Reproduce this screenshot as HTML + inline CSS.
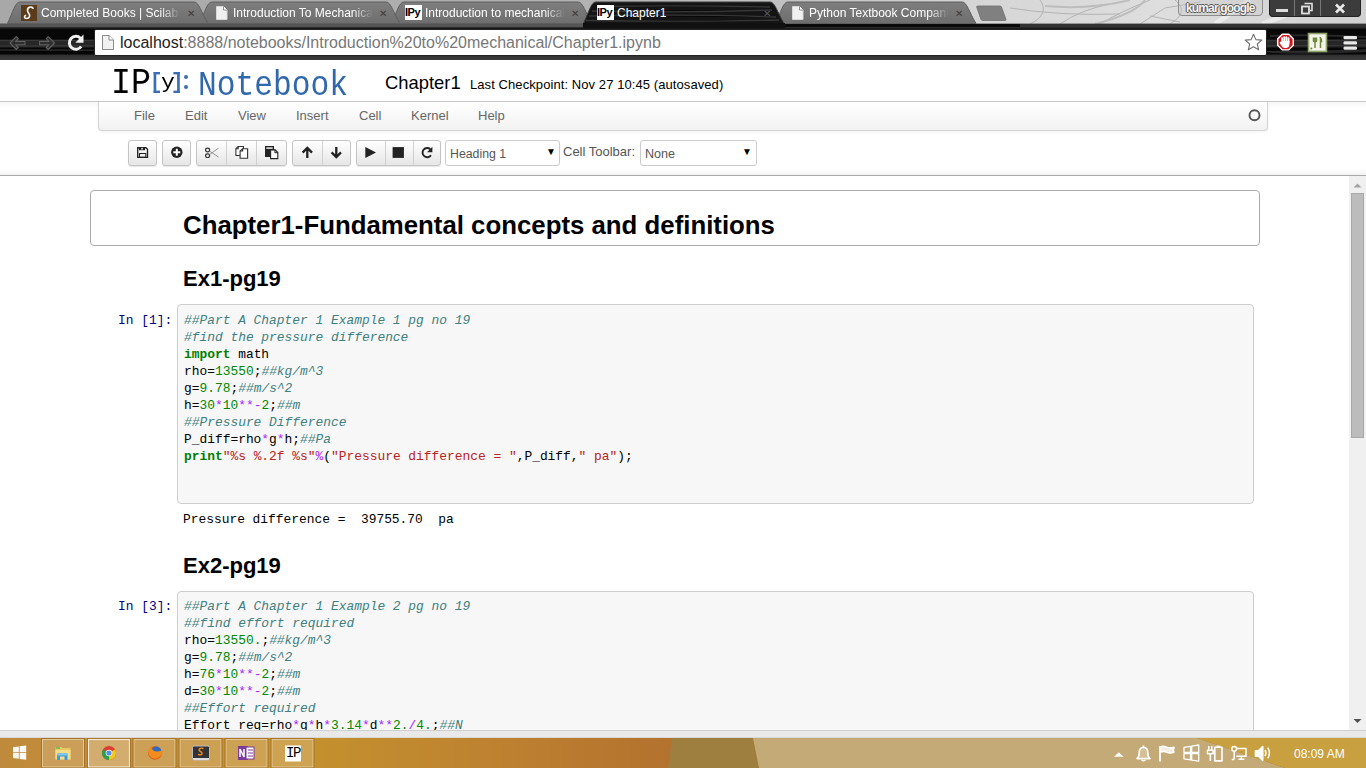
<!DOCTYPE html>
<html><head><meta charset="utf-8">
<style>
*{box-sizing:border-box;margin:0;padding:0}
html,body{width:1366px;height:768px;overflow:hidden;background:#fff;font-family:"Liberation Sans",sans-serif}
.a{position:absolute;white-space:pre}
#tabstrip{position:absolute;left:0;top:0;width:1366px;height:28px;background:linear-gradient(90deg,#a8a8a8 0%,#b0b0b0 40%,#c4c4c4 60%,#d6d6d6 72%,#dedede 85%,#d0d0d0 100%)}
#toolbar{position:absolute;left:0;top:28px;width:1366px;height:32px;background:#0c0c0c}
#hscroll{position:absolute;left:0;top:730px;width:1366px;height:8px;background:#e8e8e8;border-top:1px solid #c8c8c8}
#taskbar{position:absolute;left:0;top:738px;width:1366px;height:30px;background:linear-gradient(90deg,#b88a3a 0%,#bf9450 40%,#c39a5c 55%,#c99c3e 75%,#cc9a32 100%)}
.mono{font-family:"Liberation Mono",monospace}
.menu{font-size:13px;color:#666}
.btn{position:absolute;top:140px;height:26px;border:1px solid #c4c4c4;border-radius:3px;background:linear-gradient(#fff,#e6e6e6);box-shadow:0 1px 1px rgba(0,0,0,.1)}
.sep{position:absolute;top:0;width:1px;height:24px;background:#d0d0d0}
.code{font-family:"Liberation Mono",monospace;font-size:12.9px;line-height:17px;color:#000}
.cm{color:#408080;font-style:italic}
.kw{color:#008000;font-weight:bold}
.nu{color:#080}
.op{color:#a2f}
.st{color:#ba2121}
.prompt{font-family:"Liberation Mono",monospace;font-size:12.9px;color:#000080}
</style></head><body>
<div id="tabstrip"></div>
<!-- tree-ish texture -->
<svg class="a" style="left:0;top:0" width="1366" height="28" viewBox="0 0 1366 28">
<g stroke="#b4b4b4" stroke-width="1" fill="none">
<path d="M1030 24Q1050 14 1040 0M1060 24Q1080 10 1110 4M1100 24Q1120 12 1150 0M1140 24L1165 8L1200 2M1010 8Q1060 16 1120 14M1170 24Q1190 12 1175 0M1150 16L1180 22"/>
</g>
<g stroke="#bdbdbd" stroke-width="2" fill="none"><path d="M1095 24Q1135 14 1145 0M1045 6Q1090 10 1130 0"/></g>
<g stroke="#f2f2f2" stroke-width="5" fill="none" opacity="0.7">
<path d="M1215 24L1250 0M1262 24L1300 10"/>
</g>
</svg>
<!-- inactive tabs -->
<svg class="a" style="left:0;top:0" width="1366" height="28" viewBox="0 0 1366 28">
<defs><linearGradient id="tg" x1="0" y1="0" x2="0" y2="1"><stop offset="0" stop-color="#7e7e7e"/><stop offset="1" stop-color="#6e6e6e"/></linearGradient></defs>
<rect x="0" y="23.5" width="1366" height="4.5" fill="#555"/><rect x="780" y="24" width="240" height="4.5" fill="#0a0a0a"/><rect x="1020" y="24" width="346" height="4.5" fill="#333"/><rect x="0" y="27" width="1366" height="1" fill="#2a2a2a"/>
<path d="M976.5 6.5Q977 6 978 6H1000Q1001 6 1001.5 7L1006 19.5Q1006 20.5 1005 20.5H982.5Q981.5 20.5 981 19.5z" fill="#808080" stroke="#707070" stroke-width="0.8"/>
<path d="M775.5 23.5C781 12 783 2 788 2H962C967 2 969 12 976 23.5z" fill="url(#tg)" stroke="#5e5e5e" stroke-width="1"/>
<path d="M391.5 23.5C397 12 399 2 404 2H578C583 2 585 12 592 23.5z" fill="url(#tg)" stroke="#5e5e5e" stroke-width="1"/>
<path d="M199.5 23.5C205 12 207 2 212 2H386C391 2 393 12 400 23.5z" fill="url(#tg)" stroke="#5e5e5e" stroke-width="1"/>
<path d="M7.5 23.5C13 12 15 2 20 2H194C199 2 201 12 208 23.5z" fill="url(#tg)" stroke="#5e5e5e" stroke-width="1"/>
<path d="M583.5 23.5C589 12 591 2 596 2H770C775 2 777 12 784 23.5z" fill="#141414" stroke="#3a3a3a" stroke-width="1"/>
<g stroke="#3a3a3a" stroke-width="1.3" opacity="0.9"><path d="M600 6.5Q680 5 770 7M592 11Q680 13 772 10M589 16Q690 14 776 17M586 20.5Q690 22 779 20"/></g>
<rect x="583" y="23" width="202" height="5" fill="#111"/>
</svg>
<!-- tab contents -->
<div class="a" style="left:21px;top:5px;width:16px;height:16px;background:#5a3b1a"></div>
<svg class="a" style="left:21px;top:5px" width="16" height="16" viewBox="0 0 16 16"><path d="M12 3.2q-1-1.4-3-1q-2.5 0.6-2.5 3q0 1.6 1.2 3q1.3 1.6 0.8 3.3q-0.6 2-3 2q-1.8-0.2-2-1.4q-0.1-1.2 1-1.6" fill="none" stroke="#f0f0f0" stroke-width="1.7" stroke-linecap="round"/></svg>
<div class="a" style="left:41px;top:5px;font-size:12px;line-height:16px;color:#fff;width:140px;overflow:hidden;-webkit-mask-image:linear-gradient(90deg,#000 85%,transparent)">Completed Books | Scilab.</div>
<svg class="a" style="left:216px;top:6px" width="12" height="14" viewBox="0 0 12 14"><path d="M0.5 0.5h7l3.5 3.5v9.5h-10.5z" fill="#f0f0f0" stroke="#d8d8d8" stroke-width="1"/><path d="M7.5 0.5v3.5h3.5" fill="#fff" stroke="#777" stroke-width="0.8"/></svg>
<div class="a" style="left:233px;top:5px;font-size:12px;line-height:16px;color:#fff;width:140px;overflow:hidden;-webkit-mask-image:linear-gradient(90deg,#000 85%,transparent)">Introduction To Mechanical</div>
<div class="a" style="left:405px;top:5px;width:17px;height:15px;background:#fff;font-size:11px;font-weight:bold;color:#000;line-height:15px;letter-spacing:-0.5px">IPy</div>
<div class="a" style="left:425px;top:5px;font-size:12px;line-height:16px;color:#fff;width:140px;overflow:hidden;-webkit-mask-image:linear-gradient(90deg,#000 85%,transparent)">Introduction to mechanical</div>
<div class="a" style="left:597px;top:5px;width:17px;height:15px;background:#fff;font-size:11px;font-weight:bold;color:#000;line-height:15px;letter-spacing:-0.5px">IPy</div>
<div class="a" style="left:617px;top:5px;font-size:12px;line-height:16px;color:#fff">Chapter1</div>
<svg class="a" style="left:792px;top:6px" width="12" height="14" viewBox="0 0 12 14"><path d="M0.5 0.5h7l3.5 3.5v9.5h-10.5z" fill="#f0f0f0" stroke="#d8d8d8" stroke-width="1"/><path d="M7.5 0.5v3.5h3.5" fill="#fff" stroke="#777" stroke-width="0.8"/></svg>
<div class="a" style="left:809px;top:5px;font-size:12px;line-height:16px;color:#fff;width:140px;overflow:hidden;-webkit-mask-image:linear-gradient(90deg,#000 85%,transparent)">Python Textbook Companion</div>
<div class="a" style="left:187px;top:6px;font-size:10px;line-height:16px;color:#3c3c3c">✕</div>
<div class="a" style="left:379px;top:6px;font-size:10px;line-height:16px;color:#3c3c3c">✕</div>
<div class="a" style="left:571px;top:6px;font-size:10px;line-height:16px;color:#3c3c3c">✕</div>
<div class="a" style="left:763px;top:6px;font-size:10px;line-height:16px;color:#5a5a5a">✕</div>
<div class="a" style="left:955px;top:6px;font-size:10px;line-height:16px;color:#3c3c3c">✕</div>
<!-- profile & window controls -->
<div class="a" style="left:1178px;top:-2px;width:85px;height:18px;border:1px solid #8c8c8c;border-radius:0 0 4px 4px;background:rgba(200,200,200,.35)"></div>
<div class="a" style="left:1186px;top:1px;font-size:12px;line-height:14px;font-weight:bold;color:#f4f4f4;letter-spacing:-0.85px;text-shadow:1px 0 0 #555,-1px 0 0 #555,0 1px 0 #555,0 -1px 0 #555">kumar google</div>
<div class="a" style="left:1269px;top:0;width:92px;height:17px;background:#3c3c3c;border-radius:0 0 4px 4px;border:1px solid #222;border-top:none"></div>
<div class="a" style="left:1294px;top:0;width:1px;height:16px;background:#777"></div>
<div class="a" style="left:1320px;top:0;width:1px;height:16px;background:#777"></div>
<div class="a" style="left:1276px;top:9px;width:12px;height:3px;background:#ddd"></div>
<svg class="a" style="left:1300px;top:2px" width="14" height="13" viewBox="0 0 14 13"><path d="M4.5 1.5h7.5v7h-2" fill="none" stroke="#e0e0e0" stroke-width="1.6"/><rect x="2" y="4.5" width="7" height="7" fill="none" stroke="#e0e0e0" stroke-width="1.8"/></svg>
<svg class="a" style="left:1334px;top:3px" width="12" height="11" viewBox="0 0 12 11"><path d="M2 1.5L10 9.5M10 1.5L2 9.5" stroke="#e8e8e8" stroke-width="2.6"/></svg>
<!-- toolbar -->
<div class="a" style="left:0;top:28px;width:1366px;height:32px;background:linear-gradient(#2a2a2a 0,#080808 1px,#050505 26px,#2e2e2e 27px,#3a3a3a 31px)"></div>
<svg class="a" style="left:0;top:28px" width="1366" height="32" viewBox="0 0 1366 32">
<rect x="0" y="11.5" width="1366" height="8" fill="#262626"/><g stroke="#3c3c3c" stroke-width="1.2" fill="none" opacity="0.9">
<path d="M0 12.5Q300 11.5 700 13T1366 12"/><path d="M0 18Q250 17 600 19T1366 17"/><path d="M0 22Q400 21 900 23T1366 21"/>
</g>
<g stroke="#262626" stroke-width="2" fill="none"><path d="M1270 8Q1310 6 1366 9"/><path d="M1270 24Q1310 26 1366 23"/></g>
<!-- back/fwd -->
<path d="M10 15L16.3 8.7L18.3 10.7L15.5 13.5H25V16.7H15.5L18.3 19.5L16.3 21.5z" fill="#2e2e2e" stroke="#606060" stroke-width="1.1" stroke-linejoin="round"/>
<path d="M54.5 15L48.2 8.7L46.2 10.7L49 13.5H39.5V16.7H49L46.2 19.5L48.2 21.5z" fill="#2e2e2e" stroke="#606060" stroke-width="1.1" stroke-linejoin="round"/>
<!-- reload -->
<path d="M80.5 10.2A6.5 6.5 0 1 0 81.2 18.5" fill="none" stroke="#f0f0f0" stroke-width="3"/>
<path d="M83.5 6.5v8.2h-8.2z" fill="#f0f0f0"/>
<!-- ext icons -->
<path d="M1282.3 6.3h6.4l4.6 4.6v6.4l-4.6 4.6h-6.4l-4.6-4.6v-6.4z" fill="#d8141a" stroke="#fff" stroke-width="1.4"/>
<g fill="#fff"><rect x="1281.2" y="9.2" width="1.9" height="7" rx="0.9"/><rect x="1283.3" y="8.2" width="1.9" height="7" rx="0.9"/><rect x="1285.4" y="8.2" width="1.9" height="7" rx="0.9"/><rect x="1287.5" y="9.2" width="1.9" height="7" rx="0.9"/><path d="M1281.2 13h8.2v3.5q0 3-3 3.5h-2q-1.6-0.4-2.6-1.8l-2-3q-0.6-1 0.4-1.5q0.8-0.3 1.5 0.6z"/></g>
<rect x="1308.5" y="5.5" width="18" height="18" fill="#f4f4ea" stroke="#8ea26a" stroke-width="1.6"/>
<path d="M1315 9.5v10.5M1320.5 9.5v10.5M1313.5 9.5v3.5q1.5 2 3 0v-3.5M1319.5 9.5q2 0 2 4h-1" fill="none" stroke="#6e8a3a" stroke-width="1.5"/><circle cx="1311.3" cy="20.5" r="1" fill="#6e8a3a"/>
<g fill="#e8e8e8"><rect x="1343.5" y="8" width="13.5" height="3.2" rx="1.2"/><rect x="1343.5" y="13.3" width="13.5" height="3.2" rx="1.2"/><rect x="1343.5" y="18.6" width="13.5" height="3.2" rx="1.2"/></g>
</svg>
<!-- omnibox -->
<div class="a" style="left:94px;top:29px;width:1173px;height:27px;background:#fff;border:1px solid #222;border-radius:2px"></div>
<div class="a" style="left:102px;top:35px;width:11px;height:14px;background:#f0f0f0;border:1px solid #888;clip-path:polygon(0 0,62% 0,100% 32%,100% 100%,0 100%)"></div>
<svg class="a" style="left:102px;top:35px" width="12" height="15" viewBox="0 0 12 15"><path d="M0.5 0.5h6.5l4.5 4.5v9.5h-11z" fill="#f2f2f2" stroke="#8a8a8a" stroke-width="1"/><path d="M7 0.5v4.5h4.5" fill="#fff" stroke="#8a8a8a" stroke-width="1"/></svg>
<div class="a" style="left:120px;top:33px;font-size:16px;line-height:19px;color:#777"><span style="color:#222">localhost</span>:8888/notebooks/Introduction%20to%20mechanical/Chapter1.ipynb</div>
<svg class="a" style="left:1244px;top:33px" width="19" height="19" viewBox="0 0 19 19"><path d="M9.5 1.2l2.4 5.4 5.9 0.5-4.5 3.9 1.4 5.8-5.2-3.1-5.2 3.1 1.4-5.8-4.5-3.9 5.9-0.5z" fill="#fff" stroke="#707070" stroke-width="1.1" stroke-linejoin="round"/></svg>
<!-- page -->
<div class="a" style="left:0;top:60px;width:1366px;height:670px;background:#fff"></div>
<!-- header -->
<div class="a mono" style="left:111px;top:63px;font-size:37px;line-height:40px;color:#000;transform:scaleX(0.9);transform-origin:0 0">IP</div>
<svg class="a" style="left:0;top:0" width="200" height="100" viewBox="0 0 200 100"><g fill="#3a70b3"><rect x="153.6" y="72" width="2.7" height="21"/><rect x="153.6" y="72" width="6.4" height="2.4"/><rect x="153.6" y="90.6" width="6.4" height="2.4"/><rect x="177.1" y="72" width="2.7" height="21"/><rect x="173.4" y="72" width="6.4" height="2.4"/><rect x="173.4" y="90.6" width="6.4" height="2.4"/></g></svg>
<div class="a mono" style="left:161px;top:71px;font-size:21px;line-height:24px;color:#000;transform:scaleX(1.1);transform-origin:0 0">y</div>
<div class="a" style="left:184px;top:75px;width:4px;height:4px;border-radius:2px;background:#3a6fb0"></div>
<div class="a" style="left:184px;top:85px;width:4px;height:4px;border-radius:2px;background:#3a6fb0"></div>
<div class="a mono" style="left:198px;top:68px;font-size:34.5px;line-height:36px;color:#3068ad;transform:scaleX(0.905);transform-origin:0 0">Notebook</div>
<div class="a" style="left:385px;top:72px;font-size:18.4px;line-height:22px;color:#000">Chapter1</div>
<div class="a" style="left:470px;top:77px;font-size:13px;letter-spacing:0.08px;line-height:16px;color:#000">Last Checkpoint: Nov 27 10:45 (autosaved)</div>
<div class="a" style="left:0;top:102px;width:1366px;height:6px;background:linear-gradient(rgba(0,0,0,.035),rgba(0,0,0,0))"></div>
<div class="a" style="left:0;top:101px;width:1366px;height:1px;background:#c8c8c8"></div>
<!-- menubar -->
<div class="a" style="left:98px;top:102px;width:1170px;height:29px;border:1px solid #d4d4d4;border-top:none;border-radius:0 0 4px 4px;background:linear-gradient(#fff,#f2f2f2);box-shadow:0 1px 3px rgba(0,0,0,.06)"></div>
<div class="a menu" style="left:134px;top:108px">File</div>
<div class="a menu" style="left:185px;top:108px">Edit</div>
<div class="a menu" style="left:238px;top:108px">View</div>
<div class="a menu" style="left:296px;top:108px">Insert</div>
<div class="a menu" style="left:359px;top:108px">Cell</div>
<div class="a menu" style="left:411px;top:108px">Kernel</div>
<div class="a menu" style="left:478px;top:108px">Help</div>
<svg class="a" style="left:1246px;top:107px" width="17" height="17" viewBox="0 0 17 17"><circle cx="8.5" cy="8.2" r="5" fill="none" stroke="#555" stroke-width="1.9"/></svg>
<!-- toolbar -->
<div class="btn" style="left:128px;width:29px"></div>
<div class="btn" style="left:162px;width:29px"></div>
<div class="btn" style="left:196px;width:91px"><div class="sep" style="left:29px"></div><div class="sep" style="left:59px"></div></div>
<div class="btn" style="left:292px;width:59px"><div class="sep" style="left:29px"></div></div>
<div class="btn" style="left:356px;width:85px"><div class="sep" style="left:28px"></div><div class="sep" style="left:56px"></div></div>
<svg class="a" style="left:0;top:0" width="460" height="175" viewBox="0 0 460 175">
<g fill="#222" stroke="none">
<path d="M137.7 147.7h8.2l1.6 1.6V157.3h-9.8z" fill="none" stroke="#222" stroke-width="1.35"/>
<rect x="139" y="147" width="6" height="3.2"/>
<rect x="141.3" y="147.9" width="1.4" height="1.6" fill="#fff"/>
<rect x="139.5" y="153.5" width="6.3" height="3.8" fill="none" stroke="#222" stroke-width="1.05"/>
<circle cx="176.8" cy="152.3" r="5.7"/>
<path d="M175.8 148.8h2v2.5h2.5v2h-2.5v2.5h-2v-2.5h-2.5v-2h2.5z" fill="#fff"/>
</g>
<g fill="none" stroke="#333">
<ellipse cx="207.6" cy="150" rx="2" ry="1.8" stroke-width="1.2"/>
<ellipse cx="207.6" cy="155.7" rx="2" ry="1.8" stroke-width="1.2"/>
<path d="M209.3 151L218.5 157M209.3 154.7L218.5 148.2" stroke="#888" stroke-width="0.9"/>
</g>
<g stroke="#333" stroke-width="1.1" fill="#fff">
<path d="M238.2 146.5h5.2v9h-7.5v-6.8z"/>
<path d="M238.2 146.5v2.2h-2.3" fill="none"/>
<path d="M242.6 148.7h5v9.6h-7.5v-7.3z"/>
<path d="M242.6 148.7v2.3h-2.5" fill="none"/>
</g>
<rect x="265" y="146" width="9" height="11" fill="#222"/>
<rect x="266.3" y="147.4" width="6.4" height="1.4" fill="#fff"/>
<path d="M270.6 149.9h4.6l2.6 2.6v6.1h-7.2z" fill="#fff" stroke="#222" stroke-width="1.1"/>
<path d="M274.9 149.9v2.8h2.9" fill="none" stroke="#222" stroke-width="1"/>
<path d="M307.3 158V149.5M302.6 152.6l4.7-4.7 4.7 4.7" fill="none" stroke="#222" stroke-width="2.3"/>
<path d="M336.3 147v8.5M331.6 152.4l4.7 4.7 4.7-4.7" fill="none" stroke="#222" stroke-width="2.3"/>
<path d="M365.3 147.1L376 152.5L365.3 157.9z" fill="#222"/>
<rect x="392.6" y="147.1" width="11.3" height="10.8" fill="#222"/>
<path d="M430.3 149.3A4.6 4.6 0 1 0 431 155.2" fill="none" stroke="#222" stroke-width="1.9"/>
<path d="M432.4 146.8v5.4h-5.4z" fill="#222"/>
</svg>
<div class="a" style="left:445px;top:140px;width:115px;height:26px;border:1px solid #ccc;border-radius:3px;background:#fff"></div>
<div class="a" style="left:450px;top:147px;font-size:12.3px;color:#555">Heading 1</div>
<div class="a" style="left:546px;top:146px;font-size:10px;color:#000">▼</div>
<div class="a" style="left:563px;top:144px;font-size:13px;color:#555">Cell Toolbar:</div>
<div class="a" style="left:640px;top:140px;width:117px;height:26px;border:1px solid #ccc;border-radius:3px;background:#fff"></div>
<div class="a" style="left:645px;top:147px;font-size:12.6px;color:#555">None</div>
<div class="a" style="left:742px;top:146px;font-size:10px;color:#000">▼</div>
<div class="a" style="left:0;top:168px;width:1366px;height:7px;background:linear-gradient(#fff,#f4f4f4)"></div>
<div class="a" style="left:0;top:175px;width:1366px;height:1px;background:#a8a8a8"></div>

<!-- notebook -->
<div class="a" style="left:90px;top:190px;width:1170px;height:56px;border:1px solid #ababab;border-radius:4px"></div>
<div class="a" style="left:183px;top:210px;font-size:25.8px;line-height:30px;font-weight:bold;color:#000">Chapter1-Fundamental concepts and definitions</div>
<div class="a" style="left:183px;top:266px;font-size:22px;line-height:26px;font-weight:bold;color:#000">Ex1-pg19</div>
<div class="a prompt" style="left:118px;top:313px">In [1]:</div>
<div class="a" style="left:177px;top:304px;width:1077px;height:200px;border:1px solid #cfcfcf;border-radius:4px;background:#f7f7f7"></div>
<div class="a code" style="left:184px;top:312px"><span class="cm">##Part A Chapter 1 Example 1 pg no 19</span>
<span class="cm">#find the pressure difference</span>
<span class="kw">import</span> math
rho=<span class="nu">13550</span>;<span class="cm">##kg/m^3</span>
g=<span class="nu">9.78</span>;<span class="cm">##m/s^2</span>
h=<span class="nu">30</span><span class="op">*</span><span class="nu">10</span><span class="op">**-</span><span class="nu">2</span>;<span class="cm">##m</span>
<span class="cm">##Pressure Difference</span>
P_diff=rho<span class="op">*</span>g<span class="op">*</span>h;<span class="cm">##Pa</span>
<span class="kw">print</span><span class="st">"%s %.2f %s"</span><span class="op">%</span>(<span class="st">"Pressure difference = "</span>,P_diff,<span class="st">" pa"</span>);</div>
<div class="a code" style="left:183px;top:511px">Pressure difference =  39755.70  pa</div>
<div class="a" style="left:183px;top:553px;font-size:22px;line-height:26px;font-weight:bold;color:#000">Ex2-pg19</div>
<div class="a prompt" style="left:118px;top:599px">In [3]:</div>
<div class="a" style="left:177px;top:591px;width:1077px;height:200px;border:1px solid #cfcfcf;border-radius:4px;background:#f7f7f7"></div>
<div class="a code" style="left:184px;top:598px"><span class="cm">##Part A Chapter 1 Example 2 pg no 19</span>
<span class="cm">##find effort required</span>
rho=<span class="nu">13550.</span>;<span class="cm">##kg/m^3</span>
g=<span class="nu">9.78</span>;<span class="cm">##m/s^2</span>
h=<span class="nu">76</span><span class="op">*</span><span class="nu">10</span><span class="op">**-</span><span class="nu">2</span>;<span class="cm">##m</span>
d=<span class="nu">30</span><span class="op">*</span><span class="nu">10</span><span class="op">**-</span><span class="nu">2</span>;<span class="cm">##m</span>
<span class="cm">##Effort required</span>
Effort_req=rho<span class="op">*</span>g<span class="op">*</span>h<span class="op">*</span><span class="nu">3.14</span><span class="op">*</span>d<span class="op">**</span><span class="nu">2.</span><span class="op">/</span><span class="nu">4.</span>;<span class="cm">##N</span></div>

<!-- vscroll -->
<div class="a" style="left:1349px;top:176px;width:17px;height:554px;background:#f0f0f0"></div>
<div class="a" style="left:1351px;top:193px;width:13px;height:245px;background:#bcbcbc;border:1px solid #a8a8a8"></div>
<svg class="a" style="left:1349px;top:176px" width="17" height="554" viewBox="0 0 17 554"><path d="M4.5 11.5L8.5 7.5L12.5 11.5z" fill="#a3a3a3"/><path d="M4.5 543L8.5 547L12.5 543z" fill="#505050"/></svg>


<div class="a" style="left:0;top:730px;width:1366px;height:8px;background:#e9e9e9;border-top:1px solid #cfcfcf;border-bottom:1px solid #d8d8d8"></div>
<!-- taskbar -->
<svg class="a" style="left:0;top:738px" width="1366" height="30" viewBox="0 0 1366 30">
<defs><linearGradient id="tb1" gradientUnits="userSpaceOnUse" x1="0" y1="0" x2="680" y2="0"><stop offset="0" stop-color="#c08a3c"/><stop offset="0.45" stop-color="#c4912e"/><stop offset="0.75" stop-color="#bd8030"/><stop offset="1" stop-color="#b3712e"/></linearGradient></defs>
<rect x="0" y="0" width="1366" height="30" fill="url(#tb1)"/>
<path d="M672 0L668 30H759L753 0z" fill="#9f7f40"/>
<path d="M753 0L759 30H1285L1197 0z" fill="#c4aa76"/>
<path d="M1197 0L1285 30H1366V0z" fill="#c8a040"/>
<!-- windows logo -->
<g fill="#fff" opacity="0.95"><path d="M13 9.2l5.8-0.8v5.8H13z"/><path d="M19.6 8.3l6.6-0.9v6.8h-6.6z"/><path d="M13 15h5.8v5.8L13 20z"/><path d="M19.6 15h6.6v6.8l-6.6-0.9z"/></g>
<!-- buttons -->
<g fill="#ffffff" fill-opacity="0.17" stroke="#e6cca0" stroke-opacity="0.9" stroke-width="1">
<rect x="42.5" y="1.5" width="41" height="27.5"/>
<rect x="134" y="1.5" width="41" height="27.5"/>
<rect x="180" y="1.5" width="41" height="27.5"/>
<rect x="226" y="1.5" width="41" height="27.5"/>
<rect x="272" y="1.5" width="41" height="27.5"/>
</g>
<rect x="88.5" y="1.5" width="41" height="27.5" fill="#fff" fill-opacity="0.28" stroke="#f6ead6" stroke-width="1.2"/>
<g fill="none" stroke="#8f5e1e" stroke-opacity="0.55" stroke-width="1"><rect x="41.5" y="0.5" width="43" height="29.5"/><rect x="87.5" y="0.5" width="43" height="29.5"/><rect x="133" y="0.5" width="43" height="29.5"/><rect x="179" y="0.5" width="43" height="29.5"/><rect x="225" y="0.5" width="43" height="29.5"/><rect x="271" y="0.5" width="43" height="29.5"/></g>
<!-- explorer -->
<path d="M55.5 9h6l1 1H70.5v11.5h-15z" fill="#e8c860"/><rect x="56" y="9.3" width="4" height="1.3" fill="#3cc040"/><path d="M55.5 12h15v9.5h-15z" fill="#f4dc8a"/>
<path d="M57 15.5h10.5v6.5h-3v-3.5h-4.5v3.5h-3z" fill="#3d9be0"/><rect x="57" y="15.5" width="10.5" height="2" fill="#7cc8f6"/>
<!-- chrome -->
<circle cx="109" cy="15" r="7" fill="#dc3d2e"/>
<path d="M109 15L115.06 11.5A7 7 0 0 1 109 22z" fill="#f5c518"/>
<path d="M109 15L109 22A7 7 0 0 1 102.94 11.5z" fill="#2ba14a"/>
<circle cx="109" cy="15" r="3.3" fill="#fff"/><circle cx="109" cy="15" r="2.6" fill="#5090e8"/>
<!-- firefox -->
<circle cx="155" cy="15" r="6.8" fill="#e45a1c"/>
<circle cx="156.3" cy="13.6" r="5" fill="#2f6cc0"/>
<path d="M148.3 14q0.5-5 4-6.5q-1.5 2.5 0 4q2 2.5 5 2q3.5 -0.5 5.2 -1q-0.2 6.5-6.5 8.2q-6.5 0.5-7.7-6.7z" fill="#f28c1c"/>
<!-- sublime -->
<rect x="192.5" y="8" width="17" height="14" rx="1.5" fill="#333" stroke="#bbb" stroke-width="1"/><rect x="193" y="20" width="16" height="2" fill="#ddd"/>
<path d="M203.5 10.5q-3-1-4 0.5t1 2.5t1.5 2.5t-4 0.5" fill="none" stroke="#f08a20" stroke-width="1.4"/>
<!-- onenote -->
<rect x="238" y="8" width="10" height="14" fill="#7a3b9a"/><rect x="246" y="9" width="8" height="12" fill="#fff" stroke="#7a3b9a" stroke-width="1"/>
<path d="M240 19v-8l4 8v-8" fill="none" stroke="#fff" stroke-width="1.5"/>
<g stroke="#7a3b9a" stroke-width="1"><path d="M248 12h5M248 15h5M248 18h5"/></g>
<!-- IP -->
<rect x="285" y="7.5" width="16" height="16" fill="#fff"/>
</svg>
<div class="a" style="left:285px;top:745px;width:16px;height:16px;font-family:'Liberation Mono',monospace;font-size:14px;line-height:16px;text-align:center;color:#000;letter-spacing:-1.5px">IP</div>
<!-- tray -->
<svg class="a" style="left:1100px;top:738px" width="266" height="30" viewBox="0 0 266 30">
<path d="M14 18.8L18.8 14.3L23.6 18.8z" fill="#fff"/>
<g fill="none" stroke="#fff" stroke-width="1.6" stroke-linejoin="round">
<path d="M37 20.6q2.2-1.4 2.2-5.8q0-5.2 4.3-5.6q4.3 0.4 4.3 5.6q0 4.4 2.2 5.8z" fill="#fff" fill-opacity="0.25"/><path d="M41.5 22q2 1.6 4 0" stroke-width="1.4"/><path d="M43.5 7.5v1.6"/>
<path d="M60 23.5V8.2" stroke-width="1.8"/><path d="M60.5 8.8q3-1.2 6 0.3q3 1.4 7.5 0.2q-1 2.4 -0.2 5q-4 1.4 -7.3 -0.2q-3 -1.4 -6 0z" fill="#fff" fill-opacity="0.8"/>
<path d="M84 9.4l6.5-1.1v6.1H84zM91.7 8.1l7-1.1v7.4h-7zM84 15.7h6.5v6.2L84 20.9zM91.7 15.7h7v7.5l-7-1.1z" stroke-width="1.3"/>
<path d="M108.8 8v4.2M111.8 8v4.2M107.5 12.2h5.6v3.6h-5.6zM110.3 15.8v7.2" stroke-width="1.5"/><path d="M114.8 9.3h7.2v13.6h-7.2z" stroke-width="1.6"/><path d="M116.5 8.2h3.8" stroke-width="1.2"/>
<circle cx="134.2" cy="10.8" r="2.4" stroke-width="1.5"/><path d="M134.2 13.2v8M134.2 21.5h-2.5M136.5 10.5h9.5v7.8h-9.5M141.3 18.3v2.6M138.5 21.2h5.8" stroke-width="1.5"/>
<path d="M155.5 12.8h3l4.2-4.3v14l-4.2-4.3h-3z" fill="#fff"/><path d="M165 11.8q1.8 3.2 0 6.4M167.8 9.6q3.2 5.4 0 10.8" stroke-width="1.5"/>
</g>
</svg>
<div class="a" style="left:1294px;top:747px;font-size:12px;line-height:14px;color:#fff">08:09 AM</div>
</body></html>
